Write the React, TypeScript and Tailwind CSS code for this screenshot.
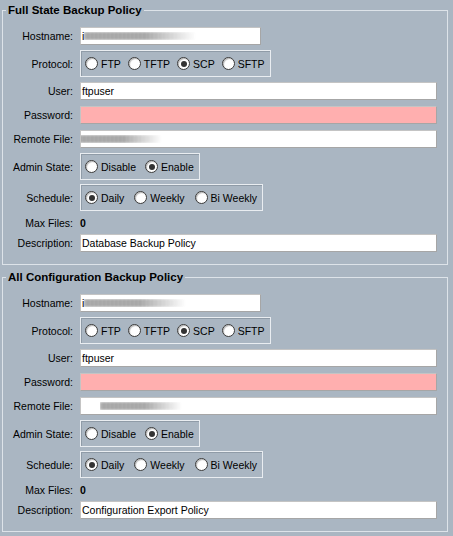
import React from "react";

type Policy = {
  title: string;
  hostSmudge: string;
  remoteSmudge: string;
  description: string;
};

const policies: Policy[] = [
  {
    title: "Full State Backup Policy",
    hostSmudge: "w-[112px]",
    remoteSmudge: "ml-[-6px] w-[86px]",
    description: "Database Backup Policy",
  },
  {
    title: "All Configuration Backup Policy",
    hostSmudge: "w-[102px]",
    remoteSmudge: "ml-[18px] w-[82px]",
    description: "Configuration Export Policy",
  },
];

function Radio({ label, checked }: { label: string; checked?: boolean }) {
  return (
    <span className="flex items-center gap-[3px]">
      <span className="flex h-[13px] w-[13px] items-center justify-center rounded-full border border-[#3a3a3a] bg-white shadow-[inset_1px_1px_1px_#b8b8b8]">
        {checked && <span className="h-[6px] w-[6px] rounded-full bg-[#333]" />}
      </span>
      <span>{label}</span>
    </span>
  );
}

function RadioGroup({ items, selected, gap }: { items: string[]; selected: string; gap: string }) {
  return (
    <div className={`inline-flex h-[27px] items-center ${gap} border border-[#e9edf1] pl-[4px] pr-[5px] shadow-[inset_1px_1px_0_#8f9ba7]`}>
      {items.map((it) => (
        <Radio key={it} label={it} checked={it === selected} />
      ))}
    </div>
  );
}

function Row({ label, className, children }: { label: string; className?: string; children: React.ReactNode }) {
  return (
    <div className={`flex items-center ${className ?? ""}`}>
      <div className="w-[70px] shrink-0 text-right">{label}</div>
      <div className="ml-[7px] flex min-w-0 flex-1">{children}</div>
    </div>
  );
}

function Field({ text, pink, className, children }: { text?: string; pink?: boolean; className?: string; children?: React.ReactNode }) {
  return (
    <div
      className={`relative flex h-[18px] items-center overflow-hidden border border-[#c4c4c4] border-b-[#a6a6a6] border-r-[#a6a6a6] pl-[1px] ${
        pink ? "bg-[#ffafaf]" : "bg-white"
      } ${className ?? "flex-1"}`}
    >
      {text}
      {children}
    </div>
  );
}

function Smudge({ className }: { className: string }) {
  return (
    <div
      className={`h-[8px] ${className} bg-[repeating-linear-gradient(90deg,#7e7e7e_0px,#b0b0b0_2px,#909090_4px)] opacity-85 blur-[1px] [mask-image:linear-gradient(90deg,black_55%,transparent)]`}
    />
  );
}

function PolicyBox({ p }: { p: Policy }) {
  return (
    <fieldset className="border border-[#dde3e9] pb-[12px] pl-0 pr-[10px] pt-[10px]">
      <legend className="ml-[3px] px-[2px] text-[11.5px] font-bold leading-[14px]">{p.title}</legend>

      <Row label="Hostname:">
        <Field className="w-[181px]">
          <span>i</span>
          <Smudge className={p.hostSmudge} />
        </Field>
      </Row>
      <Row label="Protocol:" className="mt-[5px]">
        <RadioGroup items={["FTP", "TFTP", "SCP", "SFTP"]} selected="SCP" gap="gap-[7px]" />
      </Row>
      <Row label="User:" className="mt-[5px]">
        <Field text="ftpuser" />
      </Row>
      <Row label="Password:" className="mt-[6px]">
        <Field pink />
      </Row>
      <Row label="Remote File:" className="mt-[6px]">
        <Field>
          <Smudge className={p.remoteSmudge} />
        </Field>
      </Row>
      <Row label="Admin State:" className="mt-[5px]">
        <RadioGroup items={["Disable", "Enable"]} selected="Enable" gap="gap-[9px]" />
      </Row>
      <Row label="Schedule:" className="mt-[4px]">
        <RadioGroup items={["Daily", "Weekly", "Bi Weekly"]} selected="Daily" gap="gap-[10px]" />
      </Row>
      <Row label="Max Files:" className="mt-[3px] h-[18px]">
        <span className="font-bold">0</span>
      </Row>
      <Row label="Description:" className="mt-[2px]">
        <Field text={p.description} />
      </Row>
    </fieldset>
  );
}

export default function App() {
  return (
    <div className="h-[536px] w-[453px] overflow-hidden bg-[#aab6c2] pl-[2px] pr-[5px] pt-[3px] font-['Liberation_Sans',Arial,sans-serif] text-[10.5px] leading-[14px] text-black">
      <div className="flex flex-col gap-[5px]">
        {policies.map((p) => (
          <PolicyBox key={p.title} p={p} />
        ))}
      </div>
    </div>
  );
}
